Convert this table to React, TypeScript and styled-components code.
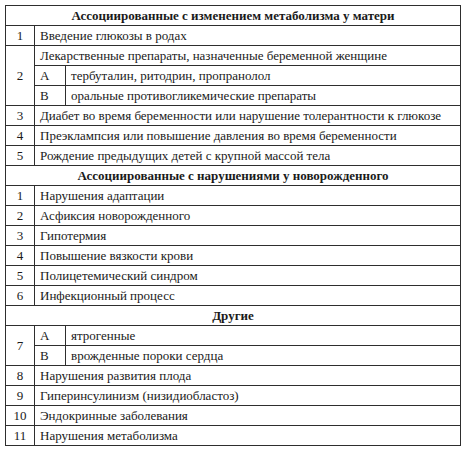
import React from 'react';
import styled, { createGlobalStyle } from 'styled-components';

const GlobalStyle = createGlobalStyle`
  html, body {
    margin: 0;
    padding: 0;
    background: #fff;
  }
`;

const SERIF = `'Liberation Serif', 'Times New Roman', serif`;

const Page = styled.div`
  padding: 5px 0 0 5px;
  font-family: ${SERIF};
`;

const Table = styled.table`
  border-collapse: collapse;
  width: 456px;
  table-layout: fixed;
  font-family: ${SERIF};
  font-size: 13px;
  color: #1a1a1a;
`;

const Row = styled.tr`
  height: 20px;
`;

const Cell = styled.td<{ $center?: boolean; $bold?: boolean }>`
  border: 1px solid #2e2e2e;
  padding: 0 5px;
  line-height: 18px;
  white-space: nowrap;
  font-family: ${SERIF};
  text-align: ${(p) => (p.$center ? 'center' : 'left')};
  font-weight: ${(p) => (p.$bold ? 'bold' : 'normal')};
  vertical-align: middle;
`;

type Item = { n: string; text?: string; lead?: string; subs?: [string, string][] };

const sections: { title: string; items: Item[] }[] = [
  {
    title: 'Ассоциированные с изменением метаболизма у матери',
    items: [
      { n: '1', text: 'Введение глюкозы в родах' },
      {
        n: '2',
        lead: 'Лекарственные препараты, назначенные беременной женщине',
        subs: [
          ['А', 'тербуталин, ритодрин, пропранолол'],
          ['В', 'оральные противогликемические препараты'],
        ],
      },
      { n: '3', text: 'Диабет во время беременности или нарушение толерантности к глюкозе' },
      { n: '4', text: 'Преэклампсия или повышение давления во время беременности' },
      { n: '5', text: 'Рождение предыдущих детей с крупной массой тела' },
    ],
  },
  {
    title: 'Ассоциированные с нарушениями у новорожденного',
    items: [
      { n: '1', text: 'Нарушения адаптации' },
      { n: '2', text: 'Асфиксия новорожденного' },
      { n: '3', text: 'Гипотермия' },
      { n: '4', text: 'Повышение вязкости крови' },
      { n: '5', text: 'Полицетемический синдром' },
      { n: '6', text: 'Инфекционный процесс' },
    ],
  },
  {
    title: 'Другие',
    items: [
      {
        n: '7',
        subs: [
          ['А', 'ятрогенные'],
          ['В', 'врожденные пороки сердца'],
        ],
      },
      { n: '8', text: 'Нарушения развития плода' },
      { n: '9', text: 'Гиперинсулинизм (низидиобластоз)' },
      { n: '10', text: 'Эндокринные заболевания' },
      { n: '11', text: 'Нарушения метаболизма' },
    ],
  },
];

function ItemRows({ item }: { item: Item }) {
  if (!item.subs) {
    return (
      <Row>
        <Cell $center>{item.n}</Cell>
        <Cell colSpan={2}>{item.text}</Cell>
      </Row>
    );
  }
  const span = item.subs.length + (item.lead ? 1 : 0);
  const subRows = item.subs.map(([letter, text], i) => (
    <Row key={letter}>
      {!item.lead && i === 0 && (
        <Cell $center rowSpan={span}>
          {item.n}
        </Cell>
      )}
      <Cell>{letter}</Cell>
      <Cell>{text}</Cell>
    </Row>
  ));
  return (
    <>
      {item.lead && (
        <Row>
          <Cell $center rowSpan={span}>
            {item.n}
          </Cell>
          <Cell colSpan={2}>{item.lead}</Cell>
        </Row>
      )}
      {subRows}
    </>
  );
}

export default function App() {
  return (
    <Page>
      <GlobalStyle />
      <Table>
        <colgroup>
          <col style={{ width: 29 }} />
          <col style={{ width: 31 }} />
          <col />
        </colgroup>
        <tbody>
          {sections.map((s) => (
            <React.Fragment key={s.title}>
              <Row>
                <Cell colSpan={3} $center $bold>
                  {s.title}
                </Cell>
              </Row>
              {s.items.map((it) => (
                <ItemRows key={s.title + it.n} item={it} />
              ))}
            </React.Fragment>
          ))}
        </tbody>
      </Table>
    </Page>
  );
}
